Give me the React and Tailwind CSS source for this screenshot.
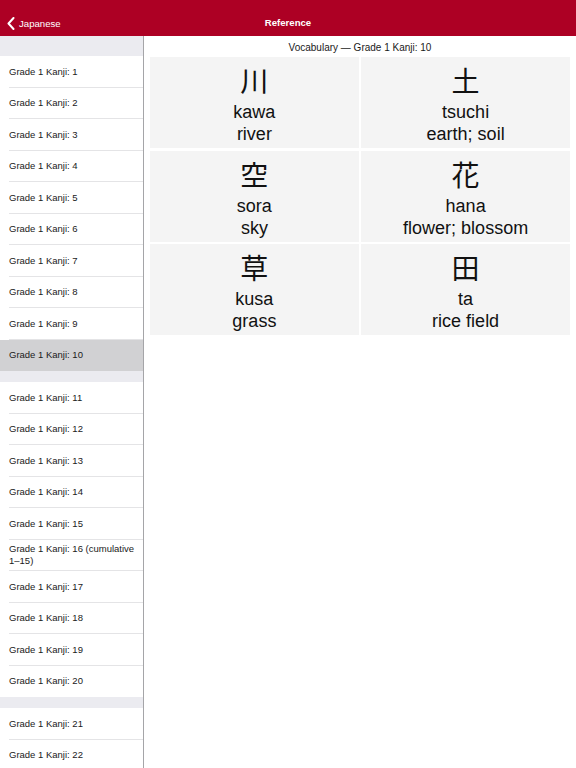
import React from "react";

// Kanji vocabulary reference — split view: lesson list on the left, word grid on the right

const sections = [
  ["Grade 1 Kanji: 1", "Grade 1 Kanji: 2", "Grade 1 Kanji: 3", "Grade 1 Kanji: 4", "Grade 1 Kanji: 5", "Grade 1 Kanji: 6", "Grade 1 Kanji: 7", "Grade 1 Kanji: 8", "Grade 1 Kanji: 9", "Grade 1 Kanji: 10"],
  ["Grade 1 Kanji: 11", "Grade 1 Kanji: 12", "Grade 1 Kanji: 13", "Grade 1 Kanji: 14", "Grade 1 Kanji: 15", "Grade 1 Kanji: 16 (cumulative 1–15)", "Grade 1 Kanji: 17", "Grade 1 Kanji: 18", "Grade 1 Kanji: 19", "Grade 1 Kanji: 20"],
  ["Grade 1 Kanji: 21", "Grade 1 Kanji: 22"],
];

const words = [
  { kanji: "川", reading: "kawa", meaning: "river" },
  { kanji: "土", reading: "tsuchi", meaning: "earth; soil" },
  { kanji: "空", reading: "sora", meaning: "sky" },
  { kanji: "花", reading: "hana", meaning: "flower; blossom" },
  { kanji: "草", reading: "kusa", meaning: "grass" },
  { kanji: "田", reading: "ta", meaning: "rice field" },
];

const selected = "Grade 1 Kanji: 10";

function Chevron() {
  return (
    <svg width="8" height="13" viewBox="0 0 8 13" className="shrink-0">
      <path d="M6.5 1 L1.5 6.5 L6.5 12" fill="none" stroke="#fff" strokeWidth="2" strokeLinecap="round" strokeLinejoin="round" />
    </svg>
  );
}

function LessonRow({ label, last }) {
  const isSel = label === selected;
  return (
    <div className={`relative flex min-h-[31.5px] items-center pl-[9px] pr-2 ${isSel ? "bg-[#d1d1d3]" : "bg-white"}`}>
      <span className="text-[9.5px] leading-[12px] text-[#1a1a1a]">{label}</span>
      {!last && !isSel && <div className="absolute bottom-0 left-[9px] right-0 h-px bg-[#e4e4e6]" />}
    </div>
  );
}

export default function App() {
  return (
    <div className="flex h-[768px] w-[576px] flex-col overflow-hidden bg-white font-['Liberation_Sans','Noto_Sans_CJK_JP',sans-serif]">
      {/* nav bar */}
      <div className="relative flex h-[36px] shrink-0 items-end bg-[#ad0024] pb-[5px]">
        <div className="flex items-center gap-[4px] pl-[7px]">
          <Chevron />
          <span className="text-[9.6px] text-white">Japanese</span>
        </div>
        <div className="absolute inset-x-0 bottom-[6px] text-center text-[9.6px] font-bold text-white">Reference</div>
      </div>

      <div className="flex min-h-0 flex-1">
        {/* lesson list */}
        <div className="w-[144px] shrink-0 overflow-hidden border-r-[1.5px] border-[#a5a5a8]">
          {sections.map((rows, si) => (
            <div key={si}>
              <div className={`bg-[#ebebf0] ${si === 0 ? "h-[20px]" : "h-[11px]"}`} />
              {rows.map((r, i) => (
                <LessonRow key={r} label={r} last={i === rows.length - 1} />
              ))}
            </div>
          ))}
        </div>

        {/* vocabulary */}
        <div className="flex-1 px-[6px]">
          <div className="flex h-[21px] items-center justify-center pt-px text-[10px] text-[#1a1a1a]">
            Vocabulary — Grade 1 Kanji: 10
          </div>
          <div className="grid grid-cols-2 gap-[2.5px]">
            {words.map((w) => (
              <div key={w.kanji} className="flex h-[91px] flex-col items-center bg-[#f4f4f4] pt-[8px] text-[#111]">
                <div className="text-[28px] leading-[36px]">{w.kanji}</div>
                <div className="text-[18px] leading-[22px]">{w.reading}</div>
                <div className="text-[18px] leading-[22px]">{w.meaning}</div>
              </div>
            ))}
          </div>
        </div>
      </div>
    </div>
  );
}
